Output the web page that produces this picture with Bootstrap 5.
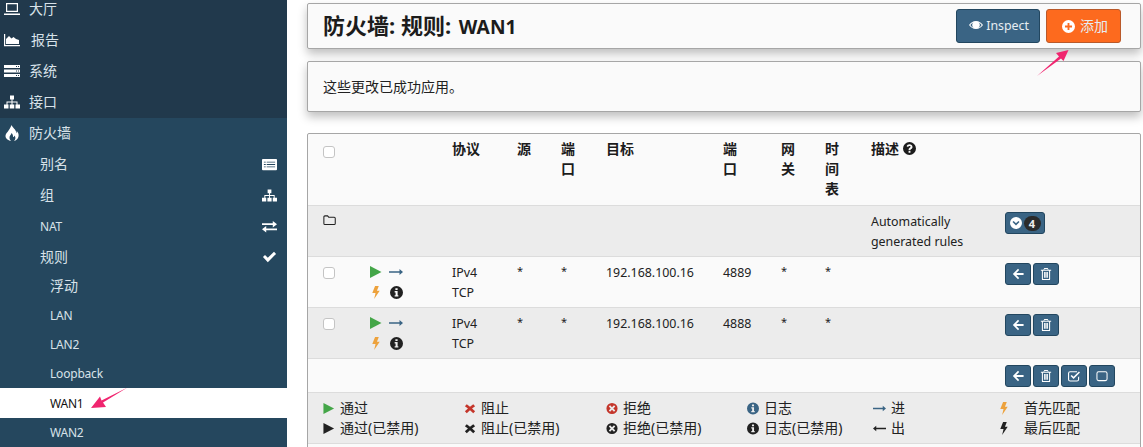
<!DOCTYPE html>
<html lang="zh-CN">

<head>
    <meta charset="UTF-8">
    <meta name="viewport" content="width=device-width, initial-scale=1.0">
    <title>防火墙: 规则: WAN1</title>
    <link href="https://cdn.jsdelivr.net/npm/bootstrap@5.3.0/dist/css/bootstrap.min.css" rel="stylesheet">
    <style>
        html, body {
            height: 447px;
            overflow: hidden;
        }

        body {
            position: relative;
            font-family: "Noto Sans", "Noto Sans CJK SC", sans-serif;
            font-size: 14px;
            line-height: 20px;
            color: #212121;
            background: #fff;
        }

        .ico {
            display: inline-block;
            width: 14px;
            height: 14px;
            fill: currentColor;
            flex: none;
        }

        .lat {
            font-size: 12.4px;
        }

        /* sidebar */
        .side-menu {
            width: 287px;
            height: 447px;
            flex: none;
            background: #25475e;
            color: #d8e2e9;
            font-size: 14px;
        }

        .side-menu .lat {
            font-size: 12px;
            letter-spacing: -.2px;
            margin-top: 2px;
        }

        .side-top {
            background: #21394c;
        }

        .side-row {
            height: 31px;
            padding: 0 10px 0 29px;
        }

        .side-row.first-row {
            height: 24.5px;
            padding-bottom: 7px;
        }

        .side-row.short-row {
            height: 30px;
        }

        .side-row .lead-ico {
            width: 16px;
            height: 16px;
            margin-left: -25px;
            margin-right: 9px;
            color: #fff;
        }

        .side-row .lead-ico.wide-lead {
            margin-right: 11px;
        }

        .side-sub {
            padding-left: 40px;
        }

        .side-sub .ico {
            color: #fff;
            width: 15px;
            height: 15px;
        }

        .side-leaf {
            height: 29px;
            padding-left: 50px;
        }

        .side-leaf.active-leaf {
            background: #fff;
            color: #111;
            height: 30px;
        }

        /* main column */
        .main-col {
            width: 834px;
            margin-left: 20px;
            padding-top: 3px;
        }

        .sheet {
            background: #fafafa;
            border: 1px solid #a6a6a6;
            border-radius: 2px;
            box-shadow: 0 5px 10px rgba(0, 0, 0, .25);
        }

        .title-sheet {
            height: 46px;
            padding: 0 19px 0 15px;
            margin-bottom: 12px;
        }

        .title-sheet h1 {
            font-size: 22px;
            line-height: 28px;
            font-weight: 700;
            margin: 0;
            color: #1c1c1c;
        }

        .title-sheet h1 span {
            font-size: 19.2px;
            margin-left: 2px;
        }

        .note-sheet {
            height: 51px;
            padding: 0 15px;
            margin-bottom: 21px;
        }

        .rule-sheet {
            box-shadow: none;
            height: 330px;
            overflow: hidden;
        }

        .btn-blue,
        .btn-add {
            --bs-btn-color: #e6edf2;
            --bs-btn-hover-color: #fff;
            color: #e6edf2;
            font-size: 12.4px;
            line-height: 20px;
            height: 34px;
            padding: 6px 10px 6px 12px;
            border-radius: 3px;
            background: #3a6484;
            border: 1px solid #22465f;
        }

        .btn-add {
            font-size: 14px;
            background: #fd6a1e;
            border-color: #b9592a;
            padding: 6px 12px 6px 15px;
            margin-left: 6px;
        }

        .btn-blue .ico,
        .btn-add .ico {
            color: #fff;
            vertical-align: -2px;
        }

        .btn-add .ico {
            width: 13px;
            height: 13px;
            margin-right: 5px;
        }

        .btn-tiny {
            background: #3a6484;
            border: 1px solid #22465f;
            border-radius: 3px;
            color: #fff;
            height: 22px;
            width: 26px;
            padding: 0;
            margin-right: 2px;
            display: inline-flex;
            align-items: center;
            justify-content: center;
        }

        .btn-tiny .ico {
            width: 12px;
            height: 12px;
        }

        .btn-group-toggle {
            width: 40px;
            gap: 2px;
        }

        .count-pill {
            background: #2b2b2b;
            color: #eee;
            border-radius: 8px;
            width: 17px;
            height: 15px;
            font-size: 11px;
            line-height: 15px;
            font-weight: 700;
        }

        /* rules table */
        .rule-table {
            table-layout: fixed;
            width: 833px;
            margin: 0;
            --bs-table-bg: transparent;
            color: #212121;
        }

        .rule-table th,
        .rule-table td {
            padding: 5px 16px 5px 8px;
            border-bottom: 1px solid #dcdcdc;
            vertical-align: top;
            line-height: 20px;
        }

        .rule-table th {
            font-size: 14px;
            font-weight: 700;
            color: #1c1c1c;
            padding-bottom: 6px;
        }

        .rule-table th .ico {
            width: 13px;
            height: 13px;
            vertical-align: -1px;
        }

        .rule-table td.lat {
            padding-top: 6px;
            padding-bottom: 4px;
        }

        .rule-table td.star-cell {
            font-size: 11px;
            padding-top: 4px;
        }

        .stack-head {
            display: block;
            width: 1em;
        }

        .rule-table td.action-cell {
            padding: 6px 0 0 8px;
        }

        .rule-table tr.grey-row td {
            background: #ececec;
        }

        .rule-table .foot-row td {
            height: 34px;
            padding: 6px 0 0 8px;
        }

        .tick-box {
            display: block;
            width: 12px;
            height: 12px;
            margin: 5px 0 0 7px;
            background: #fff;
            border: 1px solid #c4c4c4;
            border-radius: 3px;
        }

        th .tick-box {
            margin-top: 7px;
        }

        .folder-ico.ico {
            display: block;
            margin: 2px 0 0 7px;
        }

        .state-grid {
            display: grid;
            grid-template-columns: 13px 14px;
            grid-auto-rows: 20px;
            column-gap: 7px;
            margin-left: -1px;
            place-items: center;
        }

        .state-grid .bolt-ico {
            width: 8px;
            height: 13px;
        }

        .state-grid .long-ico {
            width: 14px;
            height: 8px;
        }

        .state-grid .info-ico {
            width: 13px;
            height: 13px;
        }

        .text-pass { color: #44a648; }
        .text-blue { color: #3a6484; }
        .text-amber { color: #eda23c; }
        .text-red { color: #c4362b; }

        /* legend */
        .legend-grid {
            display: grid;
            grid-template-columns: 141px 142px 141px 126px 125px 1fr;
            background: #ececec;
            border-bottom: 1px solid #dcdcdc;
            padding: 5px 0 5px 15px;
            height: 51px;
        }

        .legend-item {
            display: flex;
            align-items: center;
            height: 20px;
        }

        .legend-item .ico {
            width: 12px;
            height: 13px;
            margin-right: 5px;
        }

        .legend-item .ico.long-ico {
            width: 13px;
        }

        .legend-item .ico.wide-gap {
            margin-right: 14px;
        }

        /* annotation arrows */
        .note-arrow {
            position: absolute;
            left: 0;
            top: 0;
            width: 1143px;
            height: 447px;
            pointer-events: none;
        }
    </style>
</head>

<body>
    <svg width="0" height="0" class="position-absolute">
        <symbol id="i-laptop" viewBox="0 0 16 16"><path d="M2 2h12v9H2zM3.2 3.2v6.600h9.600V3.200zM0 12.500h16V14H0z" fill-rule="evenodd"/></symbol>
        <symbol id="i-chart" viewBox="0 0 16 16"><path d="M0 2h1.200v11H16v1.200H0z"/><path d="M2 12V7l3-3 2.500 2.500L9.500 5 12 7l3 1v4z"/></symbol>
        <symbol id="i-server" viewBox="0 0 16 16"><path d="M0 2h16v3H0zM0 6.500h16v3H0zM0 11h16v3H0z"/><path fill="#21394c" d="M12 3h1v1h-1zM14 3h1v1h-1zM12 7.500h1v1h-1zM14 7.500h1v1h-1zM12 12h1v1h-1zM14 12h1v1h-1z"/></symbol>
        <symbol id="i-sitemap" viewBox="0 0 16 16"><path d="M6 1.500h4v4H8.500v2H13.500v3h-1V8.500h-4v2h-1v-2h-4v2h-1v-3h5v-2H6zM0 10.500h4.500v4H0zM5.750 10.500h4.500v4h-4.500zM11.500 10.500H16v4h-4.500z"/></symbol>
        <symbol id="i-fire" viewBox="0 0 16 16"><path d="M7.500 0c1 2.500 4.500 4.500 5 8 .3 1 .5-.5.2-2 1.500 1.500 2.300 3.500 1.800 5.500-.5 2.500-2.500 4-4.500 4.500 1.500-1.500 2-3.500.5-5.500-.3 1-1 1.500-1.500 1.500.3-1.500-.5-3-1.500-4-.2 1.500-2.300 3-2 5 .1 1.300 1 2.500 1.500 3C4 15.500 1.500 13.500 1.500 11c0-3 4-5 6-11z"/></symbol>
        <symbol id="i-list" viewBox="0 0 16 16"><path fill-rule="evenodd" d="M1 2h14a1 1 0 0 1 1 1v10a1 1 0 0 1-1 1H1a1 1 0 0 1-1-1V3a1 1 0 0 1 1-1zM2 5v.9h2V5zM5 5v.9h9V5zM2 7.500v.9h2v-.9zM5 7.500v.9h9v-.9zM2 10v.9h2V10zM5 10v.9h9V10z"/></symbol>
        <symbol id="i-exchange" viewBox="0 0 16 16"><path d="M0 4.500h11.500V2l4.500 3.500L11.500 9V6.500H0zM16 10v2H4.500v2.500L0 11l4.500-3.500V10z"/></symbol>
        <symbol id="i-check" viewBox="0 0 16 16"><path d="M1 8.500l2.200-2.200 3 3L12.800 3 15 5.200 6.200 14z"/></symbol>
        <symbol id="i-plus" viewBox="0 0 14 14"><path fill-rule="evenodd" d="M7 0a7 7 0 1 1 0 14A7 7 0 0 1 7 0zM6 3.200v2.800H3.200v2H6v2.800h2V8h2.800V6H8V3.200z"/></symbol>
        <symbol id="i-eye" viewBox="0 0 16 14"><path fill-rule="evenodd" d="M8 2.500c3.400 0 6.300 2 8 4.500-1.700 2.500-4.600 4.500-8 4.500S1.700 9.500 0 7c1.700-2.500 4.600-4.500 8-4.500zM1.500 7c1 1.400 2.200 2.500 3.700 3.200a4 4 0 0 1 0-6.400C3.700 4.500 2.500 5.600 1.500 7zM10.800 3.800a4 4 0 0 1 0 6.400c1.500-.7 2.700-1.800 3.700-3.200-1-1.400-2.200-2.500-3.700-3.200z"/></symbol>
        <symbol id="i-question" viewBox="0 0 14 14"><path fill-rule="evenodd" d="M7 0a7 7 0 1 1 0 14A7 7 0 0 1 7 0zM6 9.500v2h2v-2zM7 2.500C5.500 2.500 4.300 3.300 3.900 4.600l1.500.8C5.700 4.600 6.200 4.200 7 4.200c.7 0 1.200.4 1.200.9 0 .6-.5.8-1 1.100C6.500 6.600 6 7.200 6 8v.7h2c0-.6.300-.9.900-1.200.7-.4 1.300-1 1.300-2.200 0-1.700-1.500-2.800-3.200-2.800z"/></symbol>
        <symbol id="i-info" viewBox="0 0 14 14"><path fill-rule="evenodd" d="M7 0a7 7 0 1 1 0 14A7 7 0 0 1 7 0zM5.800 2.300v2h2.400v-2zM5 5.500v1.400h1v3H5v1.500h4V9.900H8.200V5.500z"/></symbol>
        <symbol id="i-folder" viewBox="0 0 16 14"><path fill="none" stroke="currentColor" stroke-width="1.200" d="M1 3.500A1.200 1.200 0 0 1 2.200 2.300h3l1.300 1.500h6.300A1.200 1.200 0 0 1 14 5v6a1.200 1.200 0 0 1-1.200 1.200H2.200A1.200 1.200 0 0 1 1 11z"/></symbol>
        <symbol id="i-chev" viewBox="0 0 14 14"><path fill-rule="evenodd" d="M7 0a7 7 0 1 1 0 14A7 7 0 0 1 7 0zM4.200 4.600 2.900 5.900 7 10l4.100-4.100-1.300-1.300L7 7.400z"/></symbol>
        <symbol id="i-left" viewBox="0 0 14 14"><path d="M7 1 8.400 2.400 5 5.800h8.500v2.400H5l3.400 3.400L7 13 1 7z"/></symbol>
        <symbol id="i-trash" viewBox="0 0 14 14"><path fill-rule="evenodd" d="M5 0h4l1 2h3v1.200h-1.200V13a1 1 0 0 1-1 1H3.200a1 1 0 0 1-1-1V3.200H1V2h3zM5.300 1.200 4.900 2h4.200l-.4-.8zM3.400 3.200v9.600h7.200V3.200zM4.800 4.800H6v6.500H4.800zM6.400 4.800h1.200v6.500H6.400zM8 4.800h1.200v6.500H8z"/></symbol>
        <symbol id="i-checked" viewBox="0 0 14 14"><path fill-rule="evenodd" d="M2.500 1.500h8v1.200h-8a1.200 1.200 0 0 0-1.200 1.200v7.200a1.200 1.200 0 0 0 1.200 1.200h8a1.200 1.200 0 0 0 1.200-1.200V8.500L13 7.200v3.900a2.500 2.500 0 0 1-2.500 2.400h-8A2.500 2.500 0 0 1 0 11.100V3.900a2.500 2.500 0 0 1 2.500-2.400z"/><path d="M6.500 10.500 3 7l1.300-1.300 2.200 2.200 6.200-6.200L14 3z"/></symbol>
        <symbol id="i-square" viewBox="0 0 14 14"><path fill-rule="evenodd" d="M3 1.500h8A2.500 2.500 0 0 1 13.500 4v6.500A2.500 2.500 0 0 1 11 13H3A2.500 2.500 0 0 1 .5 10.500V4A2.500 2.500 0 0 1 3 1.500zM3 2.700A1.300 1.300 0 0 0 1.700 4v6.500A1.300 1.300 0 0 0 3 11.800h8a1.300 1.300 0 0 0 1.300-1.300V4A1.300 1.300 0 0 0 11 2.700z"/></symbol>
        <symbol id="i-play" viewBox="0 0 12 14"><path d="M0 1v12l11.500-6z"/></symbol>
        <symbol id="i-times" viewBox="0 0 12 14"><path d="M2.500 2.500 6 5.200l3.500-2.700 2 2L8.200 7l3.300 3-2 2L6 9 2.500 12l-2-2 3.300-3L.5 4.500z"/></symbol>
        <symbol id="i-ring" viewBox="0 0 14 14"><path fill-rule="evenodd" d="M7 .5a6.500 6.500 0 1 1 0 13A6.500 6.500 0 0 1 7 .5zM4.800 3.200 3.300 4.700 5.500 7 3.300 9.300l1.500 1.500L7 8.500l2.300 2.300 1.500-1.500L8.500 7l2.300-2.300-1.500-1.500L7 5.500z"/></symbol>
        <symbol id="i-right-long" viewBox="0 0 14 8"><path d="M0 3.200h10.500V1L14 4l-3.500 3V4.800H0z"/></symbol>
        <symbol id="i-left-long" viewBox="0 0 14 8"><path d="M14 3.200H3.500V1L0 4l3.500 3V4.800H14z"/></symbol>
        <symbol id="i-bolt" viewBox="0 0 8 14"><path d="M3 0h4L5 5h3L2 14l1.500-6.500H0z"/></symbol>
    </svg>

    <div class="d-flex">
        <!-- Sidebar -->
        <div class="side-menu">
            <div class="side-top">
                <div class="side-row first-row d-flex align-items-center"><svg class="ico lead-ico"><use href="#i-laptop"/></svg>大厅</div>
                <div class="side-row d-flex align-items-center"><svg class="ico lead-ico wide-lead"><use href="#i-chart"/></svg>报告</div>
                <div class="side-row d-flex align-items-center"><svg class="ico lead-ico"><use href="#i-server"/></svg>系统</div>
                <div class="side-row d-flex align-items-center"><svg class="ico lead-ico"><use href="#i-sitemap"/></svg>接口</div>
            </div>
            <div class="side-row d-flex align-items-center"><svg class="ico lead-ico"><use href="#i-fire"/></svg>防火墙</div>
            <div class="side-row side-sub d-flex align-items-center justify-content-between">别名<svg class="ico"><use href="#i-list"/></svg></div>
            <div class="side-row side-sub d-flex align-items-center justify-content-between">组<svg class="ico"><use href="#i-sitemap"/></svg></div>
            <div class="side-row side-sub d-flex align-items-center justify-content-between"><span class="lat">NAT</span><svg class="ico"><use href="#i-exchange"/></svg></div>
            <div class="side-row short-row side-sub d-flex align-items-center justify-content-between">规则<svg class="ico"><use href="#i-check"/></svg></div>
            <div class="side-leaf d-flex align-items-center">浮动</div>
            <div class="side-leaf d-flex align-items-center"><span class="lat">LAN</span></div>
            <div class="side-leaf d-flex align-items-center"><span class="lat">LAN2</span></div>
            <div class="side-leaf d-flex align-items-center"><span class="lat">Loopback</span></div>
            <div class="side-leaf active-leaf d-flex align-items-center"><span class="lat">WAN1</span></div>
            <div class="side-leaf d-flex align-items-center"><span class="lat">WAN2</span></div>
        </div>

        <!-- Main -->
        <div class="main-col">
            <div class="sheet title-sheet d-flex align-items-center justify-content-between">
                <h1>防火墙: 规则: <span>WAN1</span></h1>
                <div class="d-flex">
                    <button class="btn btn-blue"><svg class="ico"><use href="#i-eye"/></svg> Inspect</button>
                    <button class="btn btn-add"><svg class="ico"><use href="#i-plus"/></svg>添加</button>
                </div>
            </div>

            <div class="sheet note-sheet d-flex align-items-center">这些更改已成功应用。</div>

            <div class="sheet rule-sheet">
                <table class="table rule-table">
                    <colgroup>
                        <col style="width:54px">
                        <col style="width:82px">
                        <col style="width:65px">
                        <col style="width:44px">
                        <col style="width:45px">
                        <col style="width:117px">
                        <col style="width:58px">
                        <col style="width:44px">
                        <col style="width:46px">
                        <col style="width:134px">
                        <col style="width:144px">
                    </colgroup>
                    <thead>
                        <tr>
                            <th><span class="tick-box"></span></th>
                            <th></th>
                            <th>协议</th>
                            <th>源</th>
                            <th><span class="stack-head">端口</span></th>
                            <th>目标</th>
                            <th><span class="stack-head">端口</span></th>
                            <th><span class="stack-head">网关</span></th>
                            <th><span class="stack-head">时间表</span></th>
                            <th>描述 <svg class="ico"><use href="#i-question"/></svg></th>
                            <th></th>
                        </tr>
                    </thead>
                    <tbody id="rule-rows"></tbody>
                </table>
                <div class="legend-grid">
                    <div class="legend-item"><svg class="ico text-pass"><use href="#i-play"/></svg>通过</div>
                    <div class="legend-item"><svg class="ico text-red"><use href="#i-times"/></svg>阻止</div>
                    <div class="legend-item"><svg class="ico text-red"><use href="#i-ring"/></svg>拒绝</div>
                    <div class="legend-item"><svg class="ico text-blue"><use href="#i-info"/></svg>日志</div>
                    <div class="legend-item"><svg class="ico long-ico text-blue"><use href="#i-right-long"/></svg>进</div>
                    <div class="legend-item"><svg class="ico wide-gap text-amber"><use href="#i-bolt"/></svg>首先匹配</div>
                    <div class="legend-item"><svg class="ico"><use href="#i-play"/></svg>通过(已禁用)</div>
                    <div class="legend-item"><svg class="ico"><use href="#i-times"/></svg>阻止(已禁用)</div>
                    <div class="legend-item"><svg class="ico"><use href="#i-ring"/></svg>拒绝(已禁用)</div>
                    <div class="legend-item"><svg class="ico"><use href="#i-info"/></svg>日志(已禁用)</div>
                    <div class="legend-item"><svg class="ico long-ico"><use href="#i-left-long"/></svg>出</div>
                    <div class="legend-item"><svg class="ico wide-gap"><use href="#i-bolt"/></svg>最后匹配</div>
                </div>
            </div>
        </div>
    </div>

    <!-- Pink annotation arrows -->
    <svg class="note-arrow" viewBox="0 0 1143 447">
        <path fill="#f0256f" d="M127.500 387.500 103 402.500 106 407 91 408 100 396.500 101.500 400.500z"/>
        <path fill="#f0256f" d="M1037 76 1059 56.500 1056 53 1068.500 50 1063.500 61 1061 58.500z"/>
    </svg>

    <script src="https://cdn.jsdelivr.net/npm/bootstrap@5.3.0/dist/js/bootstrap.bundle.min.js"></script>
    <script>
        const ico = (name, cls = "") => `<svg class="ico ${cls}"><use href="#i-${name}"/></svg>`;
        const tinyBtn = (name) => `<button class="btn-tiny">${ico(name)}</button>`;

        const rules = [
            { port: "4889", grey: false },
            { port: "4888", grey: true }
        ];

        let rows = `
            <tr class="grey-row">
                <td>${ico("folder", "folder-ico")}</td>
                <td></td><td></td><td></td><td></td><td></td><td></td><td></td><td></td>
                <td class="pe-2 lat">Automatically generated rules</td>
                <td class="action-cell"><button class="btn-tiny btn-group-toggle">${ico("chev")}<span class="count-pill">4</span></button></td>
            </tr>`;

        rules.forEach((rule) => {
            rows += `
            <tr class="${rule.grey ? "grey-row" : ""}">
                <td><span class="tick-box"></span></td>
                <td>
                    <div class="state-grid">
                        ${ico("play", "text-pass")}${ico("right-long", "long-ico text-blue")}
                        ${ico("bolt", "bolt-ico text-amber")}${ico("info", "info-ico")}
                    </div>
                </td>
                <td class="lat">IPv4<br>TCP</td>
                <td class="star-cell">*</td>
                <td class="star-cell">*</td>
                <td class="pe-0 lat">192.168.100.16</td>
                <td class="lat">${rule.port}</td>
                <td class="star-cell">*</td>
                <td class="star-cell">*</td>
                <td></td>
                <td class="action-cell">${tinyBtn("left")}${tinyBtn("trash")}</td>
            </tr>`;
        });

        rows += `
            <tr class="foot-row">
                <td colspan="10"></td>
                <td>${tinyBtn("left")}${tinyBtn("trash")}${tinyBtn("checked")}${tinyBtn("square")}</td>
            </tr>`;

        document.getElementById("rule-rows").innerHTML = rows;
    </script>
</body>

</html>
